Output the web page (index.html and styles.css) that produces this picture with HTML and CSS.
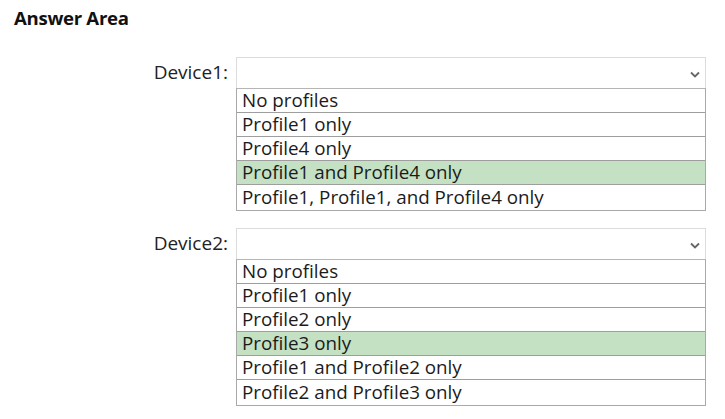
FILE: index.html
```html
<!DOCTYPE html>
<html>
<head>
<meta charset="utf-8">
<link rel="stylesheet" href="styles.css">
</head>
<body>
<div class="page">
  <h1 class="title">Answer Area</h1>
  <div class="form">
    <div class="row">
      <div class="label">Device1:</div>
      <div class="field">
        <div class="select">
          <svg class="chev" width="10" height="7" viewBox="0 0 10 7"><path d="M1 1.5 L5 5.5 L9 1.5" fill="none" stroke="#666" stroke-width="1.8"/></svg>
        </div>
        <ul class="options">
          <li>No profiles</li>
          <li>Profile1 only</li>
          <li>Profile4 only</li>
          <li class="sel">Profile1 and Profile4 only</li>
          <li>Profile1, Profile1, and Profile4 only</li>
        </ul>
      </div>
    </div>
    <div class="row">
      <div class="label">Device2:</div>
      <div class="field">
        <div class="select">
          <svg class="chev" width="10" height="7" viewBox="0 0 10 7"><path d="M1 1.5 L5 5.5 L9 1.5" fill="none" stroke="#666" stroke-width="1.8"/></svg>
        </div>
        <ul class="options">
          <li>No profiles</li>
          <li>Profile1 only</li>
          <li>Profile2 only</li>
          <li class="sel">Profile3 only</li>
          <li>Profile1 and Profile2 only</li>
          <li>Profile2 and Profile3 only</li>
        </ul>
      </div>
    </div>
  </div>
</div>
</body>
</html>
```
FILE: styles.css
```css
html, body {
  margin: 0;
  padding: 0;
  background: #fff;
}
.page {
  font-family: "Open Sans", "Noto Sans", sans-serif;
  color: #1b1b1b;
  padding: 7px 0 0 14px;
}
.title {
  margin: 0;
  font-size: 18.6px;
  font-weight: 700;
  line-height: 22px;
  letter-spacing: -0.3px;
  color: #111;
}
.form {
  display: flex;
  flex-direction: column;
  gap: 17px;
  margin-top: 28px;
}
.row {
  display: flex;
  align-items: flex-start;
}
.label {
  width: 214px;
  padding-right: 8px;
  text-align: right;
  font-size: 19px;
  line-height: 31px;
  color: #222;
}
.field {
  width: 470px;
  display: flex;
  flex-direction: column;
}
.select {
  height: 30px;
  border: 1px solid #dcdcdc;
  border-bottom: none;
  display: flex;
  align-items: center;
  justify-content: flex-end;
  padding-right: 5px;
}
.chev {
  margin-top: 2px;
}
.options {
  list-style: none;
  margin: 0;
  padding: 0;
  border: 1px solid #a9a9a9;
  border-top: 1px solid #b5b5b5;
}
.options li {
  font-size: 18.8px;
  line-height: 23px;
  padding-left: 5px;
  border-bottom: 1px solid #9e9e9e;
  white-space: nowrap;
}
.options li:last-child {
  border-bottom: none;
  line-height: 24px;
  padding-bottom: 1px;
}
.options li.sel {
  background: #c4e1c3;
}
```
